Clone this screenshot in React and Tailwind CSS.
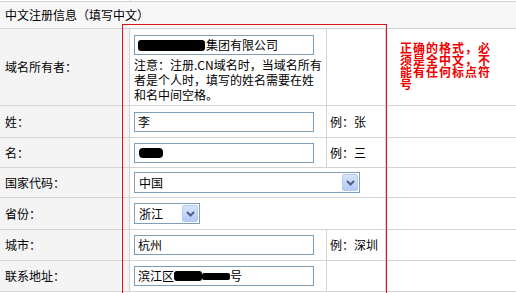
const font = "font-['Noto_Sans_CJK_SC','Liberation_Sans',sans-serif]"

function Box({ children, wide }) {
  return (
    <div
      className={`${wide ? 'w-[226px]' : 'w-[180px]'} h-[20px] border border-[#7f9db9] bg-white flex items-center px-[3px] text-[12px] leading-none text-black whitespace-nowrap`}
    >
      {children}
    </div>
  )
}

function Arrow() {
  return (
    <div className="w-[16px] h-[17px] rounded-[2px] border border-[#b5c8ef] bg-gradient-to-b from-[#d8e4fb] to-[#b4c9f5] flex items-center justify-center">
      <svg width="9" height="6" viewBox="0 0 9 6">
        <path d="M1 1 L4.5 4.5 L8 1" fill="none" stroke="#4d6185" strokeWidth="2" />
      </svg>
    </div>
  )
}

function Select({ value, w }) {
  return (
    <div className={`${w} h-[21px] border border-[#7f9db9] bg-white flex items-center justify-between pl-[4px] pr-[1px] text-[12px] leading-none text-black`}>
      <span>{value}</span>
      <Arrow />
    </div>
  )
}

function Label({ children }) {
  return (
    <div className="w-[130px] shrink-0 bg-[#f4f4f4] border-r border-[#d4d4d4] flex items-center pl-[5px] text-[12px] text-black">
      {children}
    </div>
  )
}

function Row({ label, h, children, hint, span, right }) {
  return (
    <div className={`flex ${h} border-b border-[#d4d4d4]`}>
      <Label>{label}</Label>
      {span ? (
        <div className="w-[256px] shrink-0 border-r border-[#d4d4d4] flex items-center pl-[4px]">{children}</div>
      ) : (
        <>
          <div className="w-[197px] shrink-0 border-r border-[#d4d4d4] flex items-center pl-[4px]">{children}</div>
          <div className="w-[59px] shrink-0 border-r border-[#d4d4d4] flex items-center pl-[3px] text-[12px] text-black">{hint}</div>
        </>
      )}
      <div className="flex-1 flex items-center">{right}</div>
    </div>
  )
}

export default function App() {
  return (
    <div className={`relative w-[516px] h-[293px] overflow-hidden bg-white ${font}`}>
      <div className="h-[1px] w-[131px] border-r border-[#d4d4d4]" />
      <div className="h-[28px] border-y border-[#d4d4d4] bg-[#f7f7f7] flex items-center pl-[5px] text-[12px] text-black">
        中文注册信息（填写中文）
      </div>

      <div className="flex h-[77px] border-b border-[#d4d4d4]">
        <Label>域名所有者：</Label>
        <div className="w-[197px] shrink-0 border-r border-[#d4d4d4] flex flex-col pl-[4px] pt-[6px]">
          <Box>
            <span className="inline-block w-[67px] h-[11px] bg-black rounded-[3px] mr-[1px]" />
            集团有限公司
          </Box>
          <div className="w-[188px] mt-[2px] text-[12px] leading-[15px] text-black">
            注意：注册.CN域名时，当域名所有者是个人时，填写的姓名需要在姓和名中间空格。
          </div>
        </div>
        <div className="w-[59px] shrink-0 border-r border-[#d4d4d4]" />
        <div className="flex-1 flex items-start pl-[14px] pt-[13px]">
          <div className="w-[100px] text-[12px] leading-[12px] tracking-[1px] font-bold text-[#ee0000]">
            正确的格式，必<br />
            须是全中文，不<br />
            能有任何标点符<br />
            号
          </div>
        </div>
      </div>

      <Row label="姓：" h="h-[32px]" hint="例：张">
        <Box>李</Box>
      </Row>
      <Row label="名：" h="h-[30px]" hint="例：三">
        <Box>
          <span className="inline-block w-[24px] h-[10px] bg-black rounded-[4px] ml-[1px]" />
        </Box>
      </Row>
      <Row label="国家代码：" h="h-[30px]" span>
        <Select value="中国" w="w-[226px]" />
      </Row>
      <Row label="省份：" h="h-[32px]" span>
        <Select value="浙江" w="w-[66px]" />
      </Row>
      <Row label="城市：" h="h-[31px]" hint="例：深圳">
        <Box>杭州</Box>
      </Row>
      <Row label="联系地址：" h="h-[31px]" hint="">
        <Box>
          滨江区
          <span className="inline-block w-[28px] h-[10px] bg-black rounded-[3px]" />
          <span className="inline-block w-[28px] h-[7px] bg-black rounded-[2px]" />
          号
        </Box>
      </Row>

      <div className="absolute left-[122px] top-[24px] w-[265px] h-[290px] border border-[#d9141c] pointer-events-none" />
    </div>
  )
}
